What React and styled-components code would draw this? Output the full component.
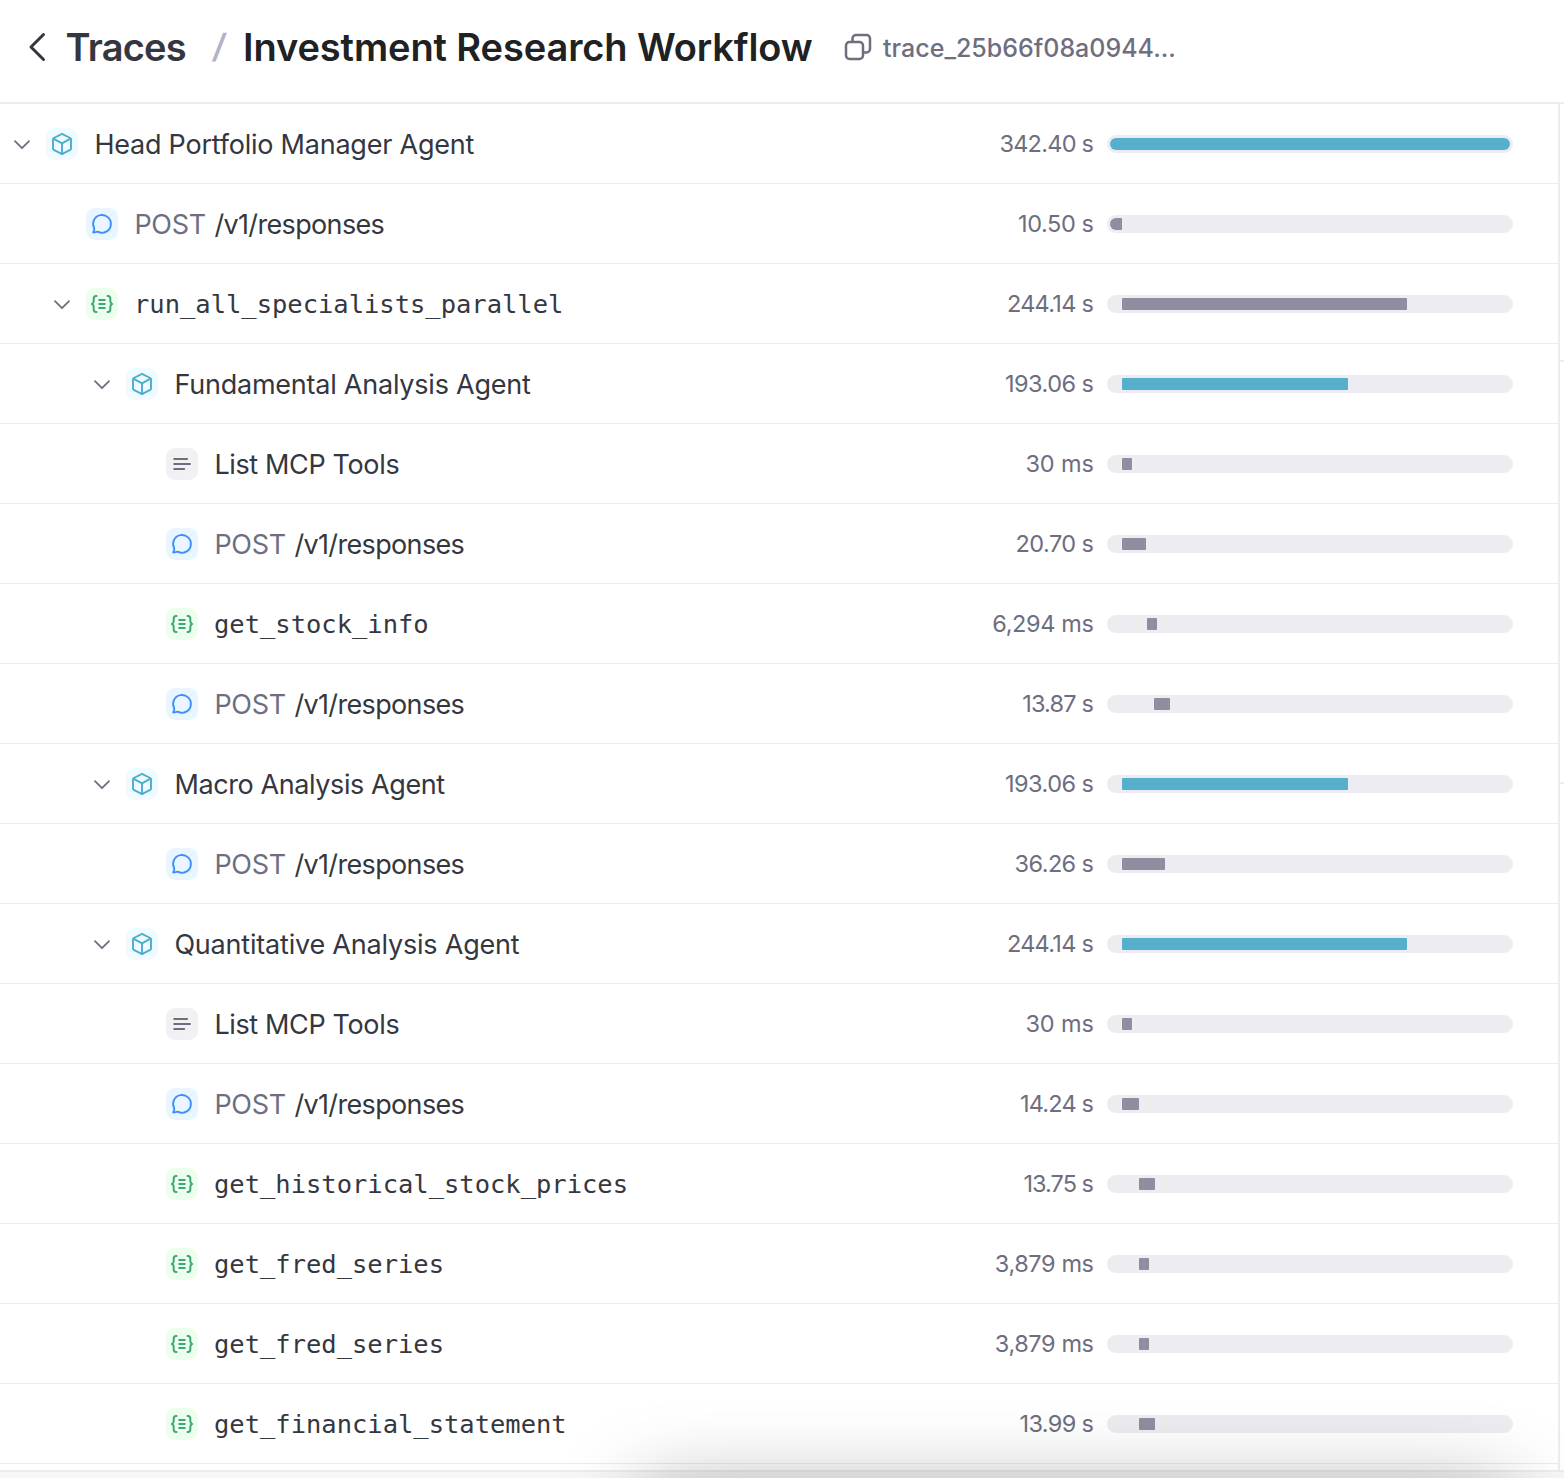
import React from "react";
import styled, { createGlobalStyle } from "styled-components";

const GlobalStyle = createGlobalStyle`
  *, *::before, *::after { box-sizing: border-box; }
  html, body { margin: 0; height: 100%; overflow: hidden; background: #fff; }
  body {
    font-family: Inter, "Liberation Sans", sans-serif;
    color: #353740;
    -webkit-font-smoothing: antialiased;
  }
`;

const Page = styled.div`
  position: relative;
  display: flex;
  flex-direction: column;
  width: 1564px;
  height: 1478px;
  overflow: hidden;
  background: #fff;
`;

const Header = styled.header`
  display: flex;
  align-items: center;
  height: 104px;
  padding: 0 0 8px 28px;
  border-bottom: 2px solid #ececf1;
  white-space: nowrap;
`;

const BackLink = styled.a`
  display: flex;
  align-items: center;
  width: 185px;
  color: #353740;
  font-size: 38px;
  font-weight: 600;
  letter-spacing: ${(p) => p.$spacing}px;
  svg { margin-right: 17.5px; }
`;

const Slash = styled.span`
  width: 30px;
  padding-bottom: 3px;
  color: #b4b2c6;
  font-size: 33px;
  font-weight: 600;
  transform: skewX(-7deg);
`;

const Title = styled.h1`
  margin: 0;
  width: 601px;
  color: #202123;
  font-size: 38px;
  font-weight: 600;
  letter-spacing: ${(p) => p.$spacing}px;
`;

const TraceId = styled.button`
  display: flex;
  align-items: center;
  gap: 11px;
  padding: 0;
  border: 0;
  background: none;
  color: #6e6e80;
  font: 550 25px Inter, "Liberation Sans", sans-serif;
  letter-spacing: ${(p) => p.$spacing}px;
  span { padding-top: 2px; }
`;

const Body = styled.div`
  display: flex;
  height: 1366px;
`;

const Tree = styled.main`
  width: 1560px;
  border-right: 2px solid #ececf1;
`;

const Detail = styled.aside`
  width: 4px;
  padding-top: 256px;
`;

const DetailSection = styled.div`
  height: 422px;
  border-top: 2px solid #ececf1;
`;

const Row = styled.div`
  display: flex;
  align-items: center;
  height: 80px;
  padding: 0 45px 0 ${(p) => 6 + p.$depth * 40}px;
  box-shadow: inset 0 -1px #ececf1;
  white-space: nowrap;
`;

const Toggle = styled.span`
  display: flex;
  justify-content: center;
  width: 32px;
  margin-right: 8px;
  color: #6e6e80;
`;

const Badge = styled.span`
  display: flex;
  align-items: center;
  justify-content: center;
  width: 32px;
  height: 32px;
  margin-right: 16px;
  border-radius: 9px;
  color: ${(p) => p.$color};
  background: ${(p) => p.$bg};
`;

const Name = styled.span`
  flex: 1;
  padding-left: 0.4px;
  font-size: 27px;
  letter-spacing: ${(p) => p.$spacing}px;
`;

const Method = styled.span`
  display: inline-block;
  width: 80px;
  color: #6e6e80;
  letter-spacing: -0.3px;
`;

const Code = styled.span`
  flex: 1;
  font: 25.48px "DejaVu Sans Mono", monospace;
`;

const Duration = styled.span`
  margin-right: ${(p) => 13 - p.$spacing}px;
  padding-bottom: 2px;
  color: #6e6e80;
  font-size: 23.5px;
  letter-spacing: ${(p) => p.$spacing}px;
`;

const Track = styled.div`
  width: 406px;
  height: 18px;
  padding: 3px;
  border-radius: 9px;
  background: #ececf1;
`;

const Clip = styled.div`
  height: 12px;
  border-radius: 6px;
  overflow: hidden;
`;

const Bar = styled.div`
  height: 12px;
  border-radius: 1px;
  background: ${(p) => (p.$agent ? "#56b0cd" : "#8e8ea0")};
`;

const Footer = styled.footer`
  height: 8px;
  border-top: 2px solid #ececf1;
  background: #f7f7f8;
`;

const PopoverShadow = styled.div`
  position: absolute;
  left: 640px;
  top: 1493px;
  width: 870px;
  height: 200px;
  box-shadow: 0 0 84px rgba(0, 0, 0, 0.36);
`;

const ChevronLeft = () => (
  <svg width="20" height="30" viewBox="0 0 20 30" fill="none" stroke="currentColor" strokeWidth="3" strokeLinecap="round" strokeLinejoin="round">
    <path d="M15.500 2.500 3 15l12.500 12.500" />
  </svg>
);

const ChevronDown = () => (
  <svg width="18" height="12" viewBox="0 0 18 12" fill="none" stroke="currentColor" strokeWidth="1.8" strokeLinecap="round" strokeLinejoin="round">
    <path d="m2 3.100 7 7 7-7" />
  </svg>
);

const CopyIcon = () => (
  <svg width="28" height="28" viewBox="0 0 28 28" fill="none" stroke="currentColor" strokeWidth="2.5" strokeLinejoin="round">
    <rect x="2" y="9" width="17" height="17" rx="3.5" />
    <path d="M8.500 9V5.500A3.500 3.500 0 0 1 12 2h10.500a3.500 3.500 0 0 1 3.500 3.500V16a3.500 3.500 0 0 1-3.500 3.500H19" />
  </svg>
);

const CubeIcon = () => (
  <svg width="24" height="24" viewBox="0 0 24 24" fill="none" stroke="currentColor" strokeWidth="1.9" strokeLinejoin="round" strokeLinecap="round">
    <path d="M12 1.900 20.100 6a1.700 1.700 0 0 1 .9 1.500v8.900a1.700 1.700 0 0 1-.9 1.500L12 22.100 3.900 17.900a1.700 1.700 0 0 1-.9-1.500V7.500A1.700 1.700 0 0 1 3.900 6Z" />
    <path d="m3.400 6.700 8.600 4.600 8.600-4.600M12 11.300v10.800" />
  </svg>
);

const ChatIcon = () => (
  <svg width="24" height="24" viewBox="0 0 24 24" fill="none" stroke="currentColor" strokeWidth="1.900" strokeLinejoin="round">
    <path d="M4.200 16.200A8.900 8.900 0 1 1 8.200 19.950c-.7-.3-1-.3-1.700-.1L3.200 20.600l1-2.900c.2-.6.2-.9 0-1.500Z" />
  </svg>
);

const FunctionIcon = () => (
  <svg width="24" height="24" viewBox="0 0 24 24" fill="none" stroke="currentColor" strokeWidth="2" strokeLinecap="round" strokeLinejoin="round">
    <path d="M6.500 4H6a2.300 2.300 0 0 0-2.300 2.500V9c0 1.700-.6 2.500-1.700 3 1.100.5 1.700 1.300 1.700 3v2.500A2.300 2.300 0 0 0 6 20h.5M17.500 4h.5a2.300 2.300 0 0 1 2.300 2.500V9c0 1.700.6 2.500 1.700 3-1.100.5-1.700 1.300-1.700 3v2.500A2.300 2.300 0 0 1 18 20h-.5M9.200 8h5.600M9.200 12h5.600M9.200 16h5.600" />
  </svg>
);

const ListIcon = () => (
  <svg width="24" height="24" viewBox="0 0 24 24" fill="none" stroke="currentColor" strokeWidth="1.900" strokeLinecap="round">
    <path d="M4.200 7h13M4.200 12h15.800M4.200 17h10" />
  </svg>
);

const KINDS = {
  agent: { icon: CubeIcon, color: "#4aafcc", bg: "#effbff" },
  response: { icon: ChatIcon, color: "#3f8efc", bg: "#e9f5ff" },
  tool: { icon: FunctionIcon, color: "#3fa37c", bg: "#ebffec" },
  list: { icon: ListIcon, color: "#6e6e80", bg: "#f1f1f4" },
};

const SPANS = [
  { depth: 0, kind: "agent", open: true, name: "Head Portfolio Manager Agent", ns: -0.23, time: "342.40 s", ts: -0.75, from: 0, size: 400 },
  { depth: 1, kind: "response", time: "10.50 s", ts: -0.4, from: 0, size: 12 },
  { depth: 1, kind: "tool", open: true, name: "run_all_specialists_parallel", time: "244.14 s", ts: -0.7, from: 12, size: 285 },
  { depth: 2, kind: "agent", open: true, name: "Fundamental Analysis Agent", ns: -0.23, time: "193.06 s", ts: -0.53, from: 12, size: 226 },
  { depth: 3, kind: "list", name: "List MCP Tools", ns: -0.36, time: "30 ms", ts: -0.1, from: 12, size: 10 },
  { depth: 3, kind: "response", time: "20.70 s", ts: -0.55, from: 12, size: 24 },
  { depth: 3, kind: "tool", name: "get_stock_info", time: "6,294 ms", ts: -0.35, from: 37, size: 10 },
  { depth: 3, kind: "response", time: "13.87 s", ts: -0.8, from: 44, size: 16 },
  { depth: 2, kind: "agent", open: true, name: "Macro Analysis Agent", ns: -0.4, time: "193.06 s", ts: -0.53, from: 12, size: 226 },
  { depth: 3, kind: "response", time: "36.26 s", ts: -0.6, from: 12, size: 43 },
  { depth: 2, kind: "agent", open: true, name: "Quantitative Analysis Agent", ns: -0.2, time: "244.14 s", ts: -0.7, from: 12, size: 285 },
  { depth: 3, kind: "list", name: "List MCP Tools", ns: -0.36, time: "30 ms", ts: -0.1, from: 12, size: 10 },
  { depth: 3, kind: "response", time: "14.24 s", ts: -0.8, from: 12, size: 17 },
  { depth: 3, kind: "tool", name: "get_historical_stock_prices", time: "13.75 s", ts: -0.98, from: 29, size: 16 },
  { depth: 3, kind: "tool", name: "get_fred_series", time: "3,879 ms", ts: -0.4, from: 29, size: 10 },
  { depth: 3, kind: "tool", name: "get_fred_series", time: "3,879 ms", ts: -0.4, from: 29, size: 10 },
  { depth: 3, kind: "tool", name: "get_financial_statement", time: "13.99 s", ts: -0.65, from: 29, size: 16 },
];

function SpanRow({ span }) {
  const { icon: Icon, color, bg } = KINDS[span.kind];
  return (
    <Row $depth={span.depth}>
      <Toggle>{span.open && <ChevronDown />}</Toggle>
      <Badge $color={color} $bg={bg}><Icon /></Badge>
      {span.kind === "tool" && <Code>{span.name}</Code>}
      {span.kind === "response" && <Name $spacing={-0.65}><Method>POST</Method>/v1/responses</Name>}
      {(span.kind === "agent" || span.kind === "list") && <Name $spacing={span.ns}>{span.name}</Name>}
      <Duration $spacing={span.ts}>{span.time}</Duration>
      <Track>
        <Clip>
          <Bar $agent={span.kind === "agent"} style={{ marginLeft: span.from, width: span.size }} />
        </Clip>
      </Track>
    </Row>
  );
}

export default function App() {
  return (
    <>
      <GlobalStyle />
      <Page>
        <Header>
          <BackLink $spacing={-0.75}><ChevronLeft />Traces</BackLink>
          <Slash>/</Slash>
          <Title $spacing={-0.1}>Investment Research Workflow</Title>
          <TraceId $spacing={0}><CopyIcon /><span>trace_25b66f08a0944...</span></TraceId>
        </Header>
        <Body>
          <Tree>{SPANS.map((span, i) => <SpanRow key={i} span={span} />)}</Tree>
          <Detail><DetailSection /><DetailSection /></Detail>
        </Body>
        <Footer />
        <PopoverShadow />
      </Page>
    </>
  );
}
